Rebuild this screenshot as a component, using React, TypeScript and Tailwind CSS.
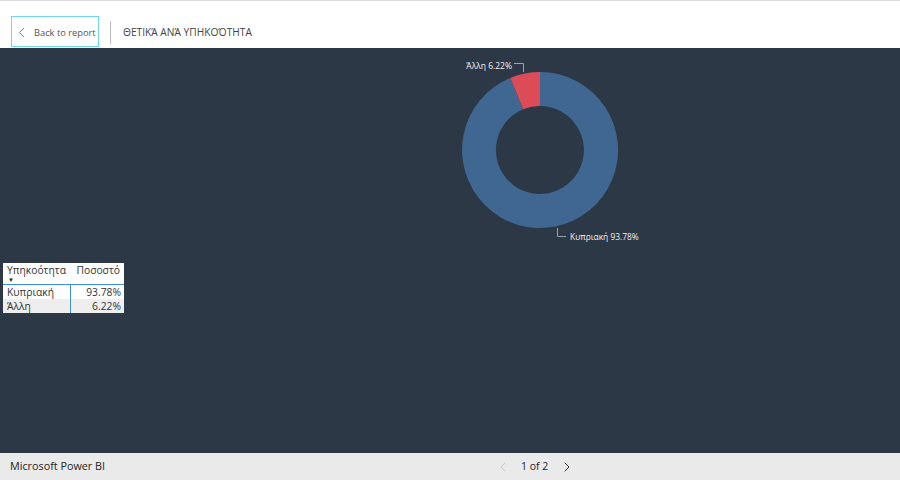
import { ChevronLeft, ChevronRight } from "lucide-react";

const rows = [
  { name: "Κυπριακή", pct: "93.78%" },
  { name: "Άλλη", pct: "6.22%" },
];

function Donut() {
  // donut is drawn on the report canvas coordinates
  return (
    <svg className="absolute inset-0" width="900" height="405" viewBox="0 0 900 405">
      <path
        d="M540 24 A78 78 0 1 1 510.3 29.9 L523.2 61.3 A44 44 0 1 0 540 58 Z"
        fill="#3f6791"
      />
      <path
        d="M510.3 29.9 A78 78 0 0 1 540 24 L540 58 A44 44 0 0 0 523.2 61.3 Z"
        fill="#dd4b58"
      />
      <polyline points="514,15.5 523.5,15.5 523.5,24" fill="none" stroke="#9aa3ab" strokeWidth="1" />
      <polyline points="557.5,180 557.5,188.5 566,188.5" fill="none" stroke="#9aa3ab" strokeWidth="1" />
      <text x="512" y="21" textAnchor="end" fill="#f2f2f2" fontSize="8.5" fontFamily="'Open Sans', sans-serif">
        Άλλη 6.22%
      </text>
      <text x="570" y="192" fill="#f2f2f2" fontSize="8.4" fontFamily="'Open Sans', sans-serif">
        Κυπριακή 93.78%
      </text>
    </svg>
  );
}

function NationalityTable() {
  return (
    <div className="absolute left-[3px] top-[215px] w-[121px] bg-white text-[10.3px] leading-none text-[#333]">
      <div className="flex h-[22px] border-b border-[#3b8fd6]">
        <div className="w-[68px] pl-[4px] pt-[2px] relative whitespace-nowrap">
          Υπηκοότητα
          <span className="absolute left-[5px] top-[14px] text-[6px] leading-none text-[#222]">▼</span>
        </div>
        <div className="flex-1 pr-[4px] pt-[2px] text-right whitespace-nowrap">Ποσοστό</div>
      </div>
      {rows.map((r, i) => (
        <div key={r.name} className={`flex h-[14px] items-center ${i === 1 ? "bg-[#eeeeee]" : "bg-white"}`}>
          <div className="w-[68px] h-full pl-[4px] flex items-center border-r border-[#3b8fd6]">{r.name}</div>
          <div className="flex-1 pr-[3px] text-right">{r.pct}</div>
        </div>
      ))}
    </div>
  );
}

export default function App() {
  return (
    <div className="w-[900px] h-[480px] flex flex-col overflow-hidden font-['Open_Sans',sans-serif]">
      <header className="h-[48px] bg-white border-t border-[#dcdcdc] flex items-end">
        <div className="flex items-center h-[32px] ml-[11px] mb-[1px]">
          <button className="h-[31px] w-[88px] border border-[#6fd6ee] flex items-center pl-[1px] pt-[4px] text-[9.3px] text-[#555] whitespace-nowrap">
            <ChevronLeft className="w-[17px] h-[17px] text-[#666] -mt-[2px]" strokeWidth={1.2} />
            <span className="ml-[4px]">Back to report</span>
          </button>
          <div className="w-px h-[23px] bg-[#bdbdbd] ml-[11px] mt-[2px]" />
          <span className="ml-[12px] pt-[3px] text-[10.2px] text-[#444] whitespace-nowrap">ΘΕΤΙΚΆ ΑΝΆ ΥΠΗΚΟΌΤΗΤΑ</span>
        </div>
      </header>
      <main className="relative h-[405px] bg-[#2c3846]">
        <Donut />
        <NationalityTable />
      </main>
      <footer className="flex-1 bg-[#eaeaea] flex items-center relative text-[#252423]">
        <span className="ml-[10px] text-[10.8px]">Microsoft Power BI</span>
        <div className="absolute left-[495px] top-0 h-full flex items-center">
          <ChevronLeft className="w-[16px] h-[16px] text-[#c2c2c2]" strokeWidth={1.3} />
          <span className="ml-[10px] text-[10.5px]">1 of 2</span>
          <ChevronRight className="ml-[11px] w-[16px] h-[16px] text-[#333]" strokeWidth={1.5} />
        </div>
      </footer>
    </div>
  );
}
